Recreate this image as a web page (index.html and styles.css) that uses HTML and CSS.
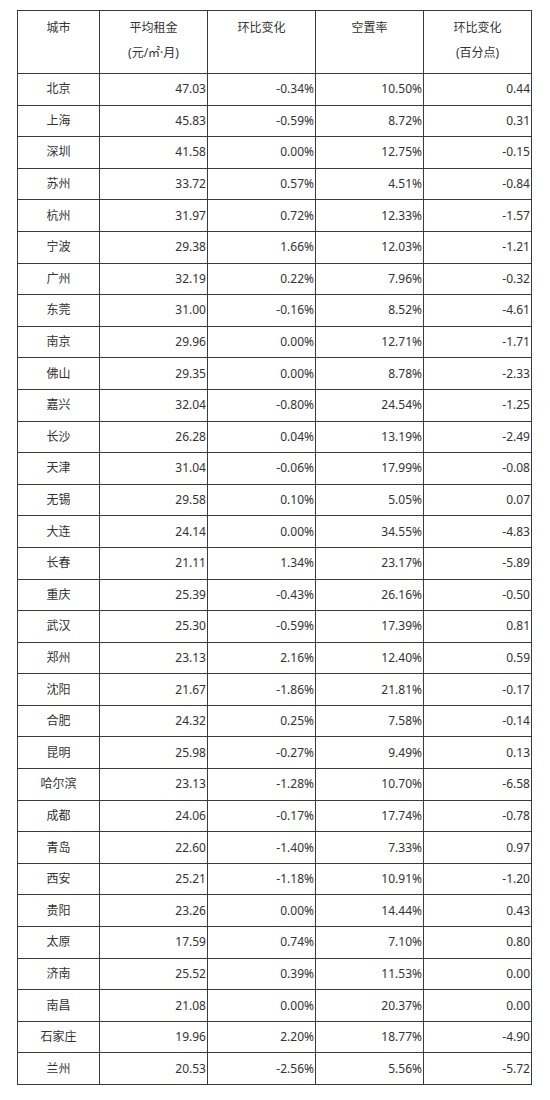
FILE: index.html
```html
<!DOCTYPE html>
<html lang="zh-CN">
<head>
<meta charset="utf-8">
<title>城市租金</title>
<link rel="stylesheet" href="styles.css">
</head>
<body>
<table class="rent">
<colgroup>
<col class="c-city"><col class="c-num"><col class="c-num"><col class="c-num"><col class="c-num">
</colgroup>
<thead>
<tr><th>城市</th><th>平均租金<br>(元/㎡·月)</th><th>环比变化</th><th>空置率</th><th>环比变化<br>(百分点)</th></tr>
</thead>
<tbody>
<tr><td>北京</td><td>47.03</td><td>-0.34%</td><td>10.50%</td><td>0.44</td></tr>
<tr><td>上海</td><td>45.83</td><td>-0.59%</td><td>8.72%</td><td>0.31</td></tr>
<tr><td>深圳</td><td>41.58</td><td>0.00%</td><td>12.75%</td><td>-0.15</td></tr>
<tr><td>苏州</td><td>33.72</td><td>0.57%</td><td>4.51%</td><td>-0.84</td></tr>
<tr><td>杭州</td><td>31.97</td><td>0.72%</td><td>12.33%</td><td>-1.57</td></tr>
<tr><td>宁波</td><td>29.38</td><td>1.66%</td><td>12.03%</td><td>-1.21</td></tr>
<tr><td>广州</td><td>32.19</td><td>0.22%</td><td>7.96%</td><td>-0.32</td></tr>
<tr><td>东莞</td><td>31.00</td><td>-0.16%</td><td>8.52%</td><td>-4.61</td></tr>
<tr><td>南京</td><td>29.96</td><td>0.00%</td><td>12.71%</td><td>-1.71</td></tr>
<tr><td>佛山</td><td>29.35</td><td>0.00%</td><td>8.78%</td><td>-2.33</td></tr>
<tr><td>嘉兴</td><td>32.04</td><td>-0.80%</td><td>24.54%</td><td>-1.25</td></tr>
<tr><td>长沙</td><td>26.28</td><td>0.04%</td><td>13.19%</td><td>-2.49</td></tr>
<tr><td>天津</td><td>31.04</td><td>-0.06%</td><td>17.99%</td><td>-0.08</td></tr>
<tr><td>无锡</td><td>29.58</td><td>0.10%</td><td>5.05%</td><td>0.07</td></tr>
<tr><td>大连</td><td>24.14</td><td>0.00%</td><td>34.55%</td><td>-4.83</td></tr>
<tr><td>长春</td><td>21.11</td><td>1.34%</td><td>23.17%</td><td>-5.89</td></tr>
<tr><td>重庆</td><td>25.39</td><td>-0.43%</td><td>26.16%</td><td>-0.50</td></tr>
<tr><td>武汉</td><td>25.30</td><td>-0.59%</td><td>17.39%</td><td>0.81</td></tr>
<tr><td>郑州</td><td>23.13</td><td>2.16%</td><td>12.40%</td><td>0.59</td></tr>
<tr><td>沈阳</td><td>21.67</td><td>-1.86%</td><td>21.81%</td><td>-0.17</td></tr>
<tr><td>合肥</td><td>24.32</td><td>0.25%</td><td>7.58%</td><td>-0.14</td></tr>
<tr><td>昆明</td><td>25.98</td><td>-0.27%</td><td>9.49%</td><td>0.13</td></tr>
<tr><td>哈尔滨</td><td>23.13</td><td>-1.28%</td><td>10.70%</td><td>-6.58</td></tr>
<tr><td>成都</td><td>24.06</td><td>-0.17%</td><td>17.74%</td><td>-0.78</td></tr>
<tr><td>青岛</td><td>22.60</td><td>-1.40%</td><td>7.33%</td><td>0.97</td></tr>
<tr><td>西安</td><td>25.21</td><td>-1.18%</td><td>10.91%</td><td>-1.20</td></tr>
<tr><td>贵阳</td><td>23.26</td><td>0.00%</td><td>14.44%</td><td>0.43</td></tr>
<tr><td>太原</td><td>17.59</td><td>0.74%</td><td>7.10%</td><td>0.80</td></tr>
<tr><td>济南</td><td>25.52</td><td>0.39%</td><td>11.53%</td><td>0.00</td></tr>
<tr><td>南昌</td><td>21.08</td><td>0.00%</td><td>20.37%</td><td>0.00</td></tr>
<tr><td>石家庄</td><td>19.96</td><td>2.20%</td><td>18.77%</td><td>-4.90</td></tr>
<tr><td>兰州</td><td>20.53</td><td>-2.56%</td><td>5.56%</td><td>-5.72</td></tr>
</tbody>
</table>
</body>
</html>
```
FILE: styles.css
```css
html, body {
  margin: 0;
  padding: 0;
  background: #fff;
}
body {
  padding: 10px 0 0 17px;
  font-family: "Noto Sans", "Noto Sans CJK SC", sans-serif;
  font-size: 12px;
  color: #333;
}
.rent {
  border-collapse: collapse;
  table-layout: fixed;
  width: 514px;
}
.c-city { width: 82px; }
.c-num { width: 108px; }
.rent th, .rent td {
  border: 1px solid #3a3a3a;
  padding: 0 1px;
}
.rent thead tr { height: 63px; }
.rent th {
  font-weight: normal;
  text-align: center;
  vertical-align: top;
  line-height: 25px;
  padding-top: 4px;
}
.rent tbody tr { height: 31.6px; }
.rent td {
  text-align: right;
  vertical-align: middle;
  line-height: 16px;
}
.rent td:first-child {
  text-align: center;
}
```
